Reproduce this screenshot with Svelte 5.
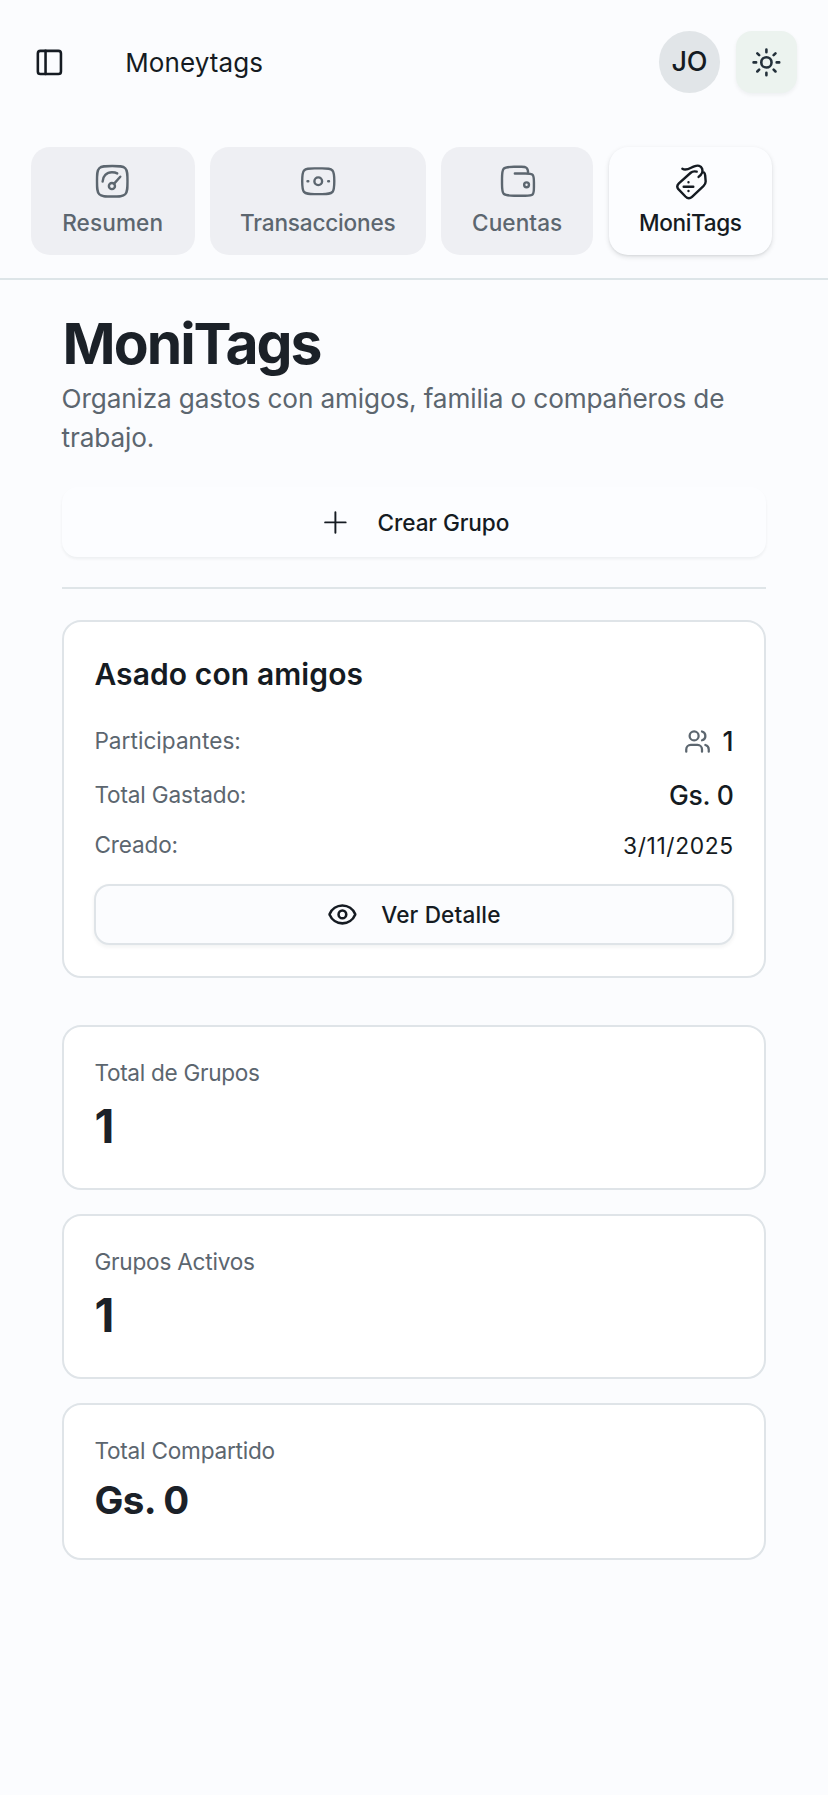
<script>
  const tabs = [
    { id: 'resumen', label: 'Resumen', width: 163.8, spacing: 0.1 },
    { id: 'transacciones', label: 'Transacciones', width: 216, spacing: -0.2 },
    { id: 'cuentas', label: 'Cuentas', width: 152.4, spacing: 0.06 },
    { id: 'monitags', label: 'MoniTags', width: 163.6, spacing: -0.4 }
  ];
  const active = 'monitags';

  const stats = [
    { label: 'Total de Grupos', value: '1', spacing: -0.3 },
    { label: 'Grupos Activos', value: '1', spacing: -0.22 },
    { label: 'Total Compartido', value: 'Gs. 0', spacing: -0.22, money: true }
  ];
</script>

<div class="app">
  <header>
    <div class="topbar">
      <button class="plain" aria-label="Menu">
        <svg class="i16" viewBox="0 0 24 24" stroke-width="2">
          <rect x="3" y="3" width="18" height="18" rx="2" />
          <path d="M9 3v18" />
        </svg>
      </button>
      <span class="brand">Moneytags</span>
      <div class="avatar">JO</div>
      <button class="theme" aria-label="Tema">
        <svg class="i16" viewBox="0 0 24 24" stroke-width="2">
          <circle cx="12" cy="12" r="4" />
          <path d="M12 2v2M12 20v2M4.93 4.93l1.41 1.41M17.66 17.66l1.41 1.41M2 12h2M20 12h2M6.34 17.66l-1.41 1.41M19.07 4.93l-1.41 1.41" />
        </svg>
      </button>
    </div>

    <nav>
      {#each tabs as tab}
        <button class="tab" class:active={tab.id === active} style="width: {tab.width}px">
          <svg class="i20" viewBox="0 0 24 24" stroke-width="1.5">
            {#if tab.id === 'resumen'}
              <path d="M2.5 12C2.5 7.52166 2.5 5.28249 3.89124 3.89124C5.28249 2.5 7.52166 2.5 12 2.5C16.4783 2.5 18.7175 2.5 20.1088 3.89124C21.5 5.28249 21.5 7.52166 21.5 12C21.5 16.4783 21.5 18.7175 20.1088 20.1088C18.7175 21.5 16.4783 21.5 12 21.5C7.52166 21.5 5.28249 21.5 3.89124 20.1088C2.5 18.7175 2.5 16.4783 2.5 12Z" />
              <circle cx="11.8" cy="15" r="1.9" />
              <path d="M13.2 13.5L17 9.2M6 12.2C6 8.9 8.5 6.4 11.8 6.4C13 6.4 14.2 6.6 15.1 7.1" />
            {:else if tab.id === 'transacciones'}
              <path d="M2 12C2 8.46 2 6.7 3.1 5.35C4.3 4 6.1 4 9.6 4H14.4C17.9 4 19.7 4 20.9 5.35C22 6.7 22 8.46 22 12C22 15.54 22 17.3 20.9 18.65C19.7 20 17.9 20 14.4 20H9.6C6.1 20 4.3 20 3.1 18.65C2 17.3 2 15.54 2 12Z" />
              <circle cx="12" cy="12" r="2.4" />
              <path d="M5.3 12H5.8M18.2 12H18.7" />
            {:else if tab.id === 'cuentas'}
              <path d="M10.5 7.2H17C19.6 7.2 20.8 7.2 21.6 8C22.4 8.8 22.4 10 22.4 12.6V15.6C22.4 18.2 22.4 19.4 21.6 20.2C20.8 21 19.6 21 17 21H10C6.5 21 4.7 21 3.6 19.9C2.5 18.8 2.5 17 2.5 13.5V10.5C2.5 7 2.5 5.2 3.6 4.1C4.7 3 6.5 3 10 3H14.6C16.2 3 17 3 17.6 3.5C18.6 4.2 18.8 5.3 18.8 7.2" />
              <circle cx="17.8" cy="14.2" r="1.5" />
            {:else}
              <path d="M17.2 9.3C19 7.9 20 5.8 19.4 4.2C18.7 2.2 16.8 1.8 14.5 2.7C11.7 3.8 9.6 5.8 7.1 4.2" />
              <path d="M16 6C14.2 5.6 13.4 5.7 12.3 6.7L4.9 13.3C3.6 14.6 3.5 15.6 4.6 16.9L9 21.5C10.5 23 11.7 23 13.1 21.7L20.2 15.1C21.3 14 21.7 13.3 21.6 11.9L21.3 8.3C21.2 7.5 21.1 7 20.5 6.5" />
              <path d="M7.9 15.4H13.9M10.9 12.6V12.7M10.9 18V18.1" />
            {/if}
          </svg>
          <span style="letter-spacing: {tab.spacing}px">{tab.label}</span>
        </button>
      {/each}
    </nav>
  </header>

  <main>
    <h1>MoniTags</h1>
    <p class="lead">Organiza gastos con amigos, familia o compañeros de trabajo.</p>

    <button class="create">
      <svg class="i16" viewBox="0 0 24 24" stroke-width="1.5"><path d="M12 4V20M4 12H20" /></svg>
      <span>Crear Grupo</span>
    </button>

    <hr />

    <section class="card group">
      <h2>Asado con amigos</h2>
      <div class="row">
        <span class="label">Participantes:</span>
        <span class="value">
          <svg class="i14" viewBox="0 0 24 24" stroke-width="2">
            <path d="M16 21v-2a4 4 0 0 0-4-4H6a4 4 0 0 0-4 4v2" />
            <circle cx="9" cy="7" r="4" />
            <path d="M22 21v-2a4 4 0 0 0-3-3.87M16 3.13a4 4 0 0 1 0 7.75" />
          </svg>
          1
        </span>
      </div>
      <div class="row">
        <span class="label total">Total Gastado:</span>
        <span class="value money">Gs. 0</span>
      </div>
      <div class="row small">
        <span class="label total">Creado:</span>
        <span class="date">3/11/2025</span>
      </div>
      <button class="detail">
        <svg class="i16" viewBox="0 0 24 24" stroke-width="2">
          <path d="M2.062 12.348a1 1 0 0 1 0-.696 10.75 10.75 0 0 1 19.876 0 1 1 0 0 1 0 .696 10.75 10.75 0 0 1-19.876 0" />
          <circle cx="12" cy="12" r="3" />
        </svg>
        <span>Ver Detalle</span>
      </button>
    </section>

    <div class="stats">
      {#each stats as stat}
        <section class="card">
          <div class="label" style="letter-spacing: {stat.spacing}px">{stat.label}</div>
          <div class="figure" class:sum={stat.money}>{stat.value}</div>
        </section>
      {/each}
    </div>
  </main>
</div>

<style>
  :global(body) {
    margin: 0;
    background: #fbfcfe;
  }
  .app {
    min-height: 1795px;
    background: #fbfcfe;
    color: #151b22;
    font-family: Inter, "Liberation Sans", sans-serif;
    font-size: 22.6px;
  }
  .app, .app * {
    box-sizing: border-box;
  }
  button {
    margin: 0;
    padding: 0;
    border: 0;
    background: none;
    color: inherit;
    font: inherit;
  }
  svg {
    display: block;
    flex: none;
    fill: none;
    stroke: currentColor;
    stroke-linecap: round;
    stroke-linejoin: round;
  }
  .i14 { width: 27px; height: 27px; }
  .i16 { width: 30.8px; height: 30.8px; }
  .i20 { width: 38.5px; height: 38.5px; }

  header {
    height: 279.6px;
    padding-top: 31.2px;
    border-bottom: 2px solid #dde5e8;
  }
  .topbar {
    display: flex;
    align-items: center;
    height: 61.6px;
    padding: 0 30.8px 0 34.4px;
  }
  .brand {
    margin-left: 60px;
    margin-right: auto;
    padding-top: 1px;
    font-size: 26px;
    letter-spacing: 0.1px;
  }
  .avatar {
    display: flex;
    align-items: center;
    justify-content: center;
    width: 61.6px;
    height: 61.6px;
    border-radius: 50%;
    background: #e1e5e8;
    font-size: 27px;
    font-weight: 450;
    letter-spacing: -0.3px;
  }
  .theme {
    display: flex;
    align-items: center;
    justify-content: center;
    width: 61.6px;
    height: 61.6px;
    margin-left: 15.4px;
    border-radius: 16px;
    background: #ecf3ef;
    color: #23303a;
    box-shadow: 0 2px 4px rgba(20, 30, 40, 0.06);
  }
  nav {
    display: flex;
    gap: 15.2px;
    padding: 53.9px 0 0 30.8px;
  }
  .tab {
    display: flex;
    flex-direction: column;
    align-items: center;
    gap: 7.9px;
    height: 108px;
    padding-top: 15.4px;
    border-radius: 19px;
    background: #eeeff3;
    color: #5c666f;
    font-weight: 500;
    line-height: 30.8px;
    white-space: nowrap;
  }
  .tab.active {
    background: #fcfdff;
    color: #151b22;
    box-shadow: 0 2px 5px rgba(20, 30, 40, 0.13), 0 1px 2px rgba(20, 30, 40, 0.06);
  }

  main {
    padding: 29.4px 61.6px 0;
  }
  h1 {
    margin: 0 0 0 1px;
    font-size: 57px;
    font-weight: 700;
    line-height: 70px;
    letter-spacing: -2px;
    color: #1b2128;
  }
  .lead {
    margin: 0;
    padding-top: 1.4px;
    font-size: 26.2px;
    line-height: 38.5px;
    letter-spacing: -0.15px;
    color: #5c666f;
  }
  .create {
    display: flex;
    align-items: center;
    justify-content: center;
    gap: 27px;
    width: 100%;
    height: 69.3px;
    margin-top: 30px;
    border-radius: 15.4px;
    background: #fcfdff;
    font-weight: 500;
    letter-spacing: -0.11px;
    box-shadow: 0 2px 3px rgba(20, 30, 40, 0.06);
  }
  .create svg {
    margin-left: 1px;
  }
  hr {
    height: 2px;
    margin: 30.4px 0 31.2px;
    border: 0;
    background: #dfe5e8;
  }
  .card {
    padding: 30.8px;
    border: 2px solid #dfe4e8;
    border-radius: 19.2px;
    background: #fff;
  }
  .group {
    height: 357.6px;
  }
  h2 {
    margin: 0 0 26.2px;
    font-size: 30px;
    font-weight: 600;
    line-height: 42.6px;
    letter-spacing: 0.1px;
  }
  .row {
    display: flex;
    align-items: center;
    justify-content: space-between;
    height: 38.5px;
    margin-bottom: 15.4px;
  }
  .row.small {
    height: 30.8px;
    margin-bottom: 23.1px;
  }
  .label {
    line-height: 30.8px;
    letter-spacing: 0.03px;
    color: #5c666f;
  }
  .row .label {
    padding-top: 1px;
  }
  .label.total {
    letter-spacing: -0.15px;
  }
  .value {
    display: flex;
    align-items: center;
    gap: 12px;
    font-size: 26.5px;
    font-weight: 500;
  }
  .value svg {
    color: #5c666f;
  }
  .value.money {
    letter-spacing: -0.3px;
  }
  .date {
    font-size: 22.8px;
    letter-spacing: 0.6px;
  }
  .detail {
    display: flex;
    align-items: center;
    justify-content: center;
    gap: 23px;
    width: 100%;
    height: 61.6px;
    border: 2px solid #dfe4e8;
    border-radius: 15.4px;
    background: #fbfcfe;
    font-weight: 500;
    letter-spacing: 0.15px;
    box-shadow: 0 2px 4px rgba(20, 30, 40, 0.06);
  }
  .stats {
    display: flex;
    flex-direction: column;
    gap: 23.7px;
    margin-top: 47px;
  }
  .figure {
    margin-top: 7.7px;
    font-size: 46px;
    font-weight: 700;
    line-height: 61.2px;
    color: #1b2128;
  }
  .figure.sum {
    font-size: 38.5px;
    line-height: 53.4px;
    letter-spacing: -0.6px;
  }
</style>
